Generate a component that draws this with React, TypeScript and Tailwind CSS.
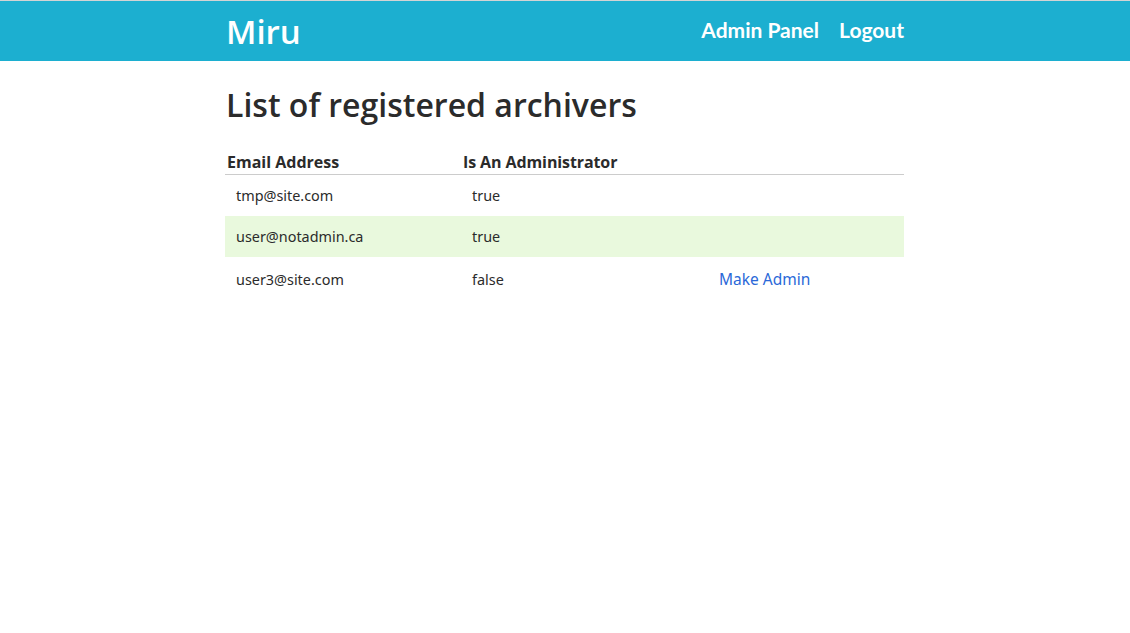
export default function App() {
  const rows = [
    { email: "tmp@site.com", admin: "true", action: "", bg: "", pad: "pt-[1px]" },
    { email: "user@notadmin.ca", admin: "true", action: "", bg: "bg-[#e9f9dd]", pad: "pt-[1px]" },
    { email: "user3@site.com", admin: "false", action: "Make Admin", bg: "", pad: "pt-[4px]" },
  ];
  return (
    <div className="min-h-[633px] bg-white" style={{ fontFamily: '"Open Sans", sans-serif' }}>
      <div className="border-t border-[#d4d4d4] bg-[#1cafd0]">
        <div className="mx-auto flex h-[60px] w-[678px] items-center justify-between">
          <div className="text-[33px] font-semibold leading-none text-white">Miru</div>
          <div className="-mt-[2px] flex gap-[20px] font-['Lato'] text-[21px] font-bold text-white">
            <span>Admin Panel</span>
            <span>Logout</span>
          </div>
        </div>
      </div>
      <div className="mx-auto w-[680px]">
        <div className="w-[679px]">
          <h1 className="mt-[20px] pl-[1px] text-[32px] font-semibold leading-[48px] text-[#2b2b2b]">
            List of registered archivers
          </h1>
          <div className="mt-[22px]">
            <div className="grid grid-cols-[238px_247px_1fr] border-b border-[#cccccc] pb-[1px] text-[16px] font-bold leading-[22px] text-[#2b2b2b]">
              <div className="pl-[2px]">Email Address</div>
              <div className="tracking-[-0.1px]">Is An Administrator</div>
              <div></div>
            </div>
            {rows.map((r) => (
              <div
                key={r.email}
                className={`grid h-[41px] grid-cols-[237px_247px_1fr] items-center font-['Noto_Sans'] text-[14.4px] text-[#2b2b2b] ${r.pad} ${r.bg}`}
              >
                <div className="pl-[11px]">{r.email}</div>
                <div className="pl-[10px]">{r.admin}</div>
                <div className="pl-[10px] text-[15.5px] text-[#2a68d8]">{r.action}</div>
              </div>
            ))}
          </div>
        </div>
      </div>
    </div>
  );
}
